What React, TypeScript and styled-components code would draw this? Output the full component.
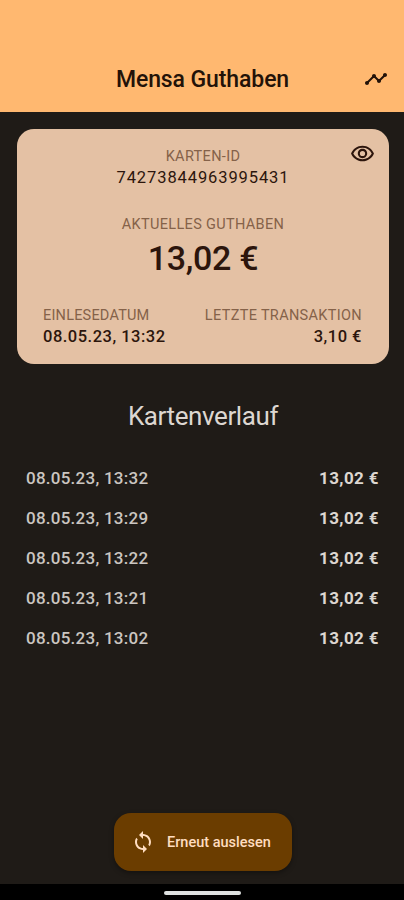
import React from "react";
import styled, { createGlobalStyle } from "styled-components";
import { MdTimeline, MdOutlineRemoveRedEye, MdSync } from "react-icons/md";

const GlobalStyle = createGlobalStyle`
  * { box-sizing: border-box; }
  body { margin: 0; background: #1f1b17; }
`;

const Screen = styled.div`
  display: flex;
  flex-direction: column;
  width: 404px;
  height: 900px;
  overflow: hidden;
  background: #1f1b17;
  color: #ddd7d1;
  font-family: Roboto, sans-serif;
  white-space: nowrap;
`;

const Header = styled.header`
  display: grid;
  grid-template-columns: 48px 1fr 48px;
  align-items: center;
  height: 112px;
  padding: 45px 4px 0;
  background: #ffb870;
  color: #231208;
`;

const Title = styled.h1`
  grid-column: 2;
  margin: 0;
  padding: 3px 0 0 1px;
  text-align: center;
  font-size: 23px;
  line-height: 28px;
  font-weight: 500;
  letter-spacing: -0.1px;
`;

const IconButton = styled.button`
  display: grid;
  place-items: center;
  padding: 0;
  border: 0;
  background: none;
  color: inherit;
  cursor: pointer;
`;

const Card = styled.section`
  position: relative;
  display: flex;
  flex-direction: column;
  align-items: center;
  width: 372px;
  height: 235px;
  margin: 17px 0 0 17px;
  padding: 17px 26px 0;
  border-radius: 17px;
  background: #e4c1a4;
  color: #2c150c;
`;

const Reveal = styled(IconButton)`
  position: absolute;
  top: 12px;
  right: 14px;
`;

const Label = styled.div<{ $spacing?: number }>`
  margin-bottom: -1px;
  padding-top: 1px;
  font-size: 14.5px;
  line-height: 20px;
  letter-spacing: ${(p) => p.$spacing ?? 0.33}px;
  color: #856249;
`;

const Value = styled.div<{ $spacing?: number; $weight?: number }>`
  font-size: 16.5px;
  line-height: 23px;
  font-weight: ${(p) => p.$weight ?? 400};
  letter-spacing: ${(p) => p.$spacing ?? 0.5}px;
`;

const Balance = styled.div`
  display: flex;
  flex-direction: column;
  align-items: center;
  margin-top: 25px;
`;

const Amount = styled.div`
  font-size: 34px;
  line-height: 48px;
  font-weight: 500;
  letter-spacing: -0.3px;
`;

const CardFooter = styled.div`
  display: flex;
  justify-content: space-between;
  align-self: stretch;
  margin-top: 23px;
  padding-right: 1px;
`;

const Field = styled.div<{ $end?: boolean }>`
  text-align: ${(p) => (p.$end ? "right" : "left")};
`;

const SectionTitle = styled.h2`
  margin: 36px 0 0;
  padding-left: 2px;
  text-align: center;
  font-size: 26px;
  line-height: 32px;
  font-weight: 400;
  letter-spacing: -0.4px;
`;

const History = styled.ul`
  flex: 1;
  margin: 26px 0 0;
  padding: 0 25px 0 26px;
  list-style: none;
`;

const Entry = styled.li`
  display: flex;
  align-items: center;
  justify-content: space-between;
  height: 40px;
  font-size: 17px;
`;

const EntryDate = styled.span`
  font-weight: 500;
  letter-spacing: 0.25px;
  color: #cbc6c1;
`;

const EntryAmount = styled.span`
  font-weight: 700;
  letter-spacing: 0.4px;
`;

const ScanButton = styled.button`
  display: flex;
  align-items: center;
  gap: 12px;
  width: 178px;
  height: 58px;
  margin: 0 0 13px 114px;
  padding: 0 0 0 17px;
  border: 0;
  border-radius: 17px;
  background: #6b3d00;
  color: #ffddc0;
  box-shadow: 0 2px 5px rgba(0, 0, 0, 0.35);
  font: 500 14.5px/20px Roboto, sans-serif;
  cursor: pointer;
`;

const ScanLabel = styled.span`
  padding-top: 2px;
`;

const SystemBar = styled.footer`
  display: flex;
  justify-content: center;
  height: 16px;
  padding-top: 7px;
  background: #000;
`;

const HomeHandle = styled.div`
  width: 77px;
  height: 4px;
  border-radius: 2px;
  background: #dfe2e1;
`;

const entries = ["13:32", "13:29", "13:22", "13:21", "13:02"];

export default function App() {
  return (
    <>
      <GlobalStyle />
      <Screen>
        <Header>
          <Title>Mensa Guthaben</Title>
          <IconButton aria-label="Statistik">
            <MdTimeline size={24} />
          </IconButton>
        </Header>
        <Card>
          <Reveal aria-label="Karten-ID anzeigen">
            <MdOutlineRemoveRedEye size={25} />
          </Reveal>
          <Label>KARTEN-ID</Label>
          <Value $spacing={0.9}>74273844963995431</Value>
          <Balance>
            <Label>AKTUELLES GUTHABEN</Label>
            <Amount>13,02 €</Amount>
          </Balance>
          <CardFooter>
            <Field>
              <Label $spacing={0.2}>EINLESEDATUM</Label>
              <Value $weight={500}>08.05.23, 13:32</Value>
            </Field>
            <Field $end>
              <Label>LETZTE TRANSAKTION</Label>
              <Value $weight={500}>3,10 €</Value>
            </Field>
          </CardFooter>
        </Card>
        <SectionTitle>Kartenverlauf</SectionTitle>
        <History>
          {entries.map((time) => (
            <Entry key={time}>
              <EntryDate>08.05.23, {time}</EntryDate>
              <EntryAmount>13,02 €</EntryAmount>
            </Entry>
          ))}
        </History>
        <ScanButton>
          <MdSync size={24} />
          <ScanLabel>Erneut auslesen</ScanLabel>
        </ScanButton>
        <SystemBar>
          <HomeHandle />
        </SystemBar>
      </Screen>
    </>
  );
}
